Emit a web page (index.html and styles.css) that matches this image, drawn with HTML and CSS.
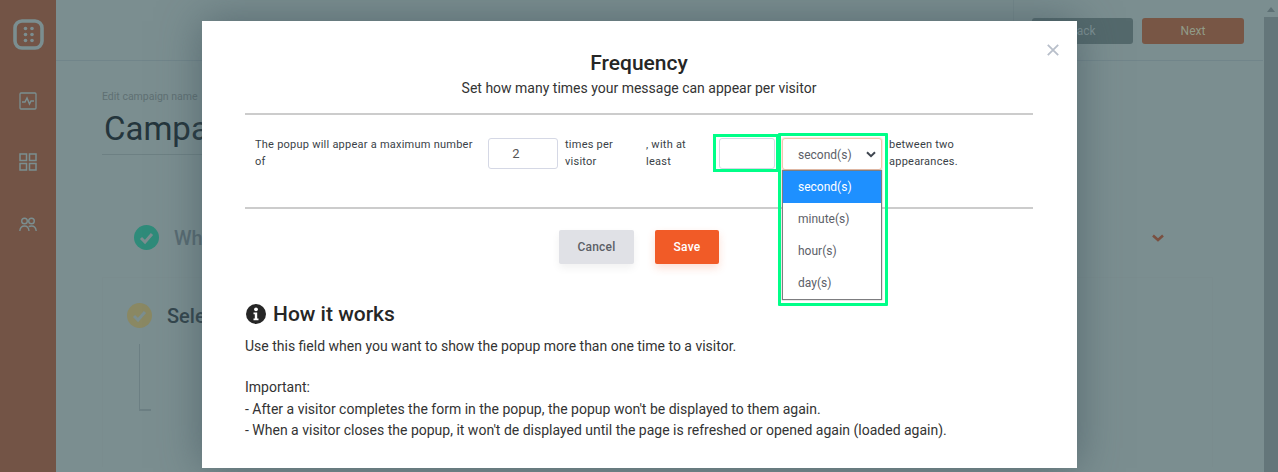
FILE: index.html
```html
<!DOCTYPE html>
<html lang="en">
<head>
<meta charset="utf-8">
<title>Frequency</title>
<link rel="stylesheet" href="styles.css">
</head>
<body>
<div class="app">
  <aside class="sidebar">
    <svg class="logo" width="32" height="32" viewBox="0 0 32 32" fill="none"><rect x="2" y="2" width="27" height="27" rx="7" stroke="#7b8e90" stroke-width="3.6"/><g fill="#7b8e90"><circle cx="12.500" cy="9.500" r="1.800"/><circle cx="19" cy="9.500" r="1.800"/><circle cx="12.500" cy="15.500" r="1.800"/><circle cx="19" cy="15.500" r="1.800"/><circle cx="12.500" cy="21.500" r="1.800"/><circle cx="19" cy="21.500" r="1.800"/></g></svg>
    <svg class="nav-icon first" width="18" height="18" viewBox="0 0 18 18" fill="none" stroke="#7b8e90"><rect x="1" y="1" width="16" height="16" rx="1" stroke-width="1.300"/><path d="M3 10h3l2-4 2.500 6 1.500-3h3" stroke-width="1.500"/></svg>
    <svg class="nav-icon second" width="18" height="18" viewBox="0 0 18 18" fill="none" stroke="#7b8e90" stroke-width="1.500"><rect x="1" y="1" width="6.500" height="6.500"/><rect x="10.500" y="1" width="6.500" height="6.500"/><rect x="1" y="10.500" width="6.500" height="6.500"/><rect x="10.500" y="10.500" width="6.500" height="6.500"/></svg>
    <svg class="nav-icon third" width="18" height="18" viewBox="0 0 18 18" fill="none" stroke="#7b8e90" stroke-width="1.400"><circle cx="5.500" cy="5" r="2.800"/><circle cx="12.500" cy="5" r="2.800"/><path d="M.8 15c.3-3.500 2.200-5 4.700-5s4.200 1.500 4.500 5M9.700 10.600c.8-.5 1.700-.6 2.800-.6 2.500 0 4.400 1.500 4.700 5"/></svg>
  </aside>
  <main class="main">
    <header class="topbar">
      <div class="topbar-actions">
        <span class="top-btn back">Back</span>
        <span class="top-btn next">Next</span>
      </div>
    </header>
    <section class="campaign">
      <div class="name-label">Edit campaign name</div>
      <div class="name-value">Campaign</div>
      <div class="step step-one">
        <svg width="25" height="25" viewBox="0 0 25 25"><circle cx="12.500" cy="12.500" r="12.500" fill="#2f8b7a"/><path d="M7 13l4 4 7-8" fill="none" stroke="#7b8e90" stroke-width="3"/></svg>
        <span class="step-title muted">What</span>
        <svg class="step-chevron" width="12" height="8" viewBox="0 0 12 8"><path d="M1 1.500l5 4.500 5-4.500" fill="none" stroke="#7a5040" stroke-width="2.600"/></svg>
      </div>
      <div class="card">
        <div class="step">
          <svg width="25" height="25" viewBox="0 0 25 25"><circle cx="12.500" cy="12.500" r="12.500" fill="#8a8863"/><path d="M7 13l4 4 7-8" fill="none" stroke="#7b8e90" stroke-width="3"/></svg>
          <span class="step-title">Select</span>
        </div>
        <div class="bracket"></div>
      </div>
    </section>
  </main>
  <div class="scrollbar"><span class="scroll-arrow"></span><span class="scroll-thumb"></span></div>
</div>

<div class="modal">
  <svg class="close" width="12" height="12" viewBox="0 0 12 12"><path d="M.8.800l10.400 10.400M11.200.800L.8 11.200" stroke="#b8bfca" stroke-width="1.800"/></svg>
  <h1 class="modal-title">Frequency</h1>
  <p class="modal-sub">Set how many times your message can appear per visitor</p>
  <div class="freq-row">
    <div class="cell cell-text">The popup will appear a maximum number of</div>
    <input class="field field-count" type="text" value="2">
    <div class="cell cell-times">times per visitor</div>
    <div class="cell cell-least">, with at least</div>
    <div class="mark-input"><input class="field field-gap" type="text"></div>
    <div class="select-wrap">
      <div class="select-box">
        <span>second(s)</span>
        <svg width="10" height="7" viewBox="0 0 10 7"><path d="M1 1.200l4 4 4-4" fill="none" stroke="#3f4650" stroke-width="2"/></svg>
      </div>
      <ul class="options">
        <li class="selected">second(s)</li>
        <li>minute(s)</li>
        <li>hour(s)</li>
        <li>day(s)</li>
      </ul>
      <div class="mark-select"></div>
    </div>
    <div class="cell cell-end">between two appearances.</div>
  </div>
  <div class="actions">
    <button class="btn cancel" type="button">Cancel</button>
    <button class="btn save" type="button">Save</button>
  </div>
  <h2 class="how">
    <svg width="20" height="20" viewBox="0 0 20 20"><circle cx="10" cy="10" r="10" fill="#262626"/><circle cx="10" cy="5.300" r="1.900" fill="#fff"/><path d="M7.500 8.500h3.700v6h1.300v1.700H7.500v-1.700h1.300v-4.300H7.500z" fill="#fff"/></svg>
    How it works
  </h2>
  <div class="how-text">
    <p>Use this field when you want to show the popup more than one time to a visitor.</p>
    <p class="gap">Important:</p>
    <p>- After a visitor completes the form in the popup, the popup won't be displayed to them again.</p>
    <p>- When a visitor closes the popup, it won't de displayed until the page is refreshed or opened again (loaded again).</p>
  </div>
</div>
</body>
</html>
```
FILE: styles.css
```css
* { box-sizing: border-box; }
html, body { margin: 0; height: 472px; overflow: hidden; }
body { font-family: Roboto, "Liberation Sans", sans-serif; background: #7b8e90; position: relative; }
.app { display: flex; height: 472px; }
.sidebar { width: 56px; flex: none; background: #735446; display: flex; flex-direction: column; align-items: center; padding-top: 19px; }
.logo { margin-left: 1px; }
.nav-icon { display: block; }
.nav-icon.first { margin-top: 41px; }
.nav-icon.second { margin-top: 43px; }
.nav-icon.third { margin-top: 45px; }
.main { flex: 1; min-width: 0; }
.topbar { height: 61px; border-bottom: 1px solid #71858a; display: flex; justify-content: flex-end; }
.topbar-actions { width: 250px; border-left: 1px solid #75888b; display: flex; gap: 9px; padding: 18px 0 0 18px; }
.top-btn { width: 101px; height: 26px; border-radius: 3px; font-size: 12px; line-height: 26px; text-align: center; color: #7d9093; }
.top-btn.back { background: #54696c; }
.top-btn.next { width: 102px; background: #785645; color: #919b88; }
.campaign { padding: 29px 50px 0 46px; }
.name-label { font-size: 10.500px; line-height: 14px; color: #5f7073; }
.name-value { width: 340px; height: 49px; margin-top: 2px; font-size: 33px; line-height: 46px; padding-left: 2px; color: #24353c; border-bottom: 1px solid #6d8083; }
.step { display: flex; align-items: center; }
.step-one { margin: 70px 0 0 32px; position: relative; }
.step-title { margin-left: 15px; font-size: 20px; font-weight: 500; color: #33454c; }
.step-title.muted { color: #586b72; }
.step-chevron { position: absolute; left: 1018px; top: 9px; }
.card { margin-top: 27px; height: 190px; padding: 25px 0 0 24px; border: 1px solid #7a8c8e; border-bottom: 0; }
.bracket { width: 12px; height: 67px; margin: 16px 0 0 12px; border-left: 1px solid #6c7f83; border-bottom: 2px solid #6c7f83; }
.scrollbar { width: 15px; flex: none; display: flex; flex-direction: column; align-items: center; }
.scroll-arrow { margin-top: 7px; border: 4px solid transparent; border-top: 0; border-bottom: 5px solid #5d7074; }
.scroll-thumb { width: 14px; flex: 1; margin-top: 5px; background: #64767a; }

.modal { position: absolute; left: 202px; top: 21px; width: 875px; height: 447px; background: #fff; padding: 29px 44px 0 43px; box-shadow: 0 0 40px rgba(60, 80, 90, .6); color: #2b2b2b; }
.close { position: absolute; left: 845px; top: 23px; }
.modal-title { margin: 0; font-size: 21px; font-weight: 500; line-height: 26px; text-align: center; color: #262626; }
.modal-sub { margin: 0; padding-bottom: 12px; border-bottom: 2px solid #cccccc; font-size: 14px; line-height: 25px; text-align: center; color: #333; }
.freq-row { display: flex; align-items: flex-start; height: 94px; padding: 21px 0 0 10px; border-bottom: 2px solid #cccccc; font-size: 11px; line-height: 17px; letter-spacing: .24px; color: #3a3f47; }
.cell { flex: none; }
.cell-text { width: 233px; padding-right: 8px; }
.cell-times { width: 81px; margin-left: 7px; padding-right: 8px; }
.cell-least { width: 54px; padding-right: 10px; margin-right: 13px; }
.cell-end { width: 80px; margin-left: 7px; }
.field { display: block; height: 31px; background: #fff; border: 1px solid #d5d8e5; border-radius: 3px; font: 13px Roboto, sans-serif; color: #555; outline: 0; padding: 0; }
.field-count { width: 70px; text-align: center; padding-right: 14px; margin-top: 2px; }
.mark-input { width: 65px; height: 38px; margin-top: -2px; padding: 1px 0 0 3px; border: 3px solid #00ff88; border-right-width: 2px; flex: none; }
.mark-input .field { width: 56px; }
.select-wrap { position: relative; width: 100px; margin-left: 4px; flex: none; }
.select-box { height: 32px; margin-top: 2px; padding: 0 5px 0 15px; display: flex; align-items: center; justify-content: space-between; font-size: 12px; letter-spacing: 0; color: #5c6068; background: #fff; border: 1px solid #f3c4ac; border-radius: 3px; box-shadow: 0 0 0 1px #fbeae2; }
.select-box span { padding-top: 2px; }
.options { position: absolute; left: 0; top: 34px; width: 100px; height: 130px; margin: 0; padding: 0; list-style: none; background: #fff; border: 1px solid #7d7d80; box-shadow: 0 0 1px #777; font-size: 12px; letter-spacing: 0; color: #5c6068; z-index: 2; }
.options li { height: 32px; line-height: 32px; padding-left: 15px; }
.options li.selected { background: #1e90ff; color: #fff; }
.mark-select { position: absolute; left: -4px; top: -3px; width: 110px; height: 173px; border: 3px solid #00ff88; border-radius: 1px; pointer-events: none; z-index: 3; }
.actions { display: flex; justify-content: center; gap: 21px; padding-top: 21px; }
.btn { height: 34px; border: 0; border-radius: 2px; font: 500 12px Roboto, sans-serif; letter-spacing: .2px; padding: 0; }
.cancel { width: 75px; background: #e0e1e6; color: #5c5f66; box-shadow: 0 4px 8px rgba(0, 0, 0, .06); }
.save { width: 64px; background: #f15b27; color: #fff; box-shadow: 0 4px 8px rgba(241, 91, 39, .2); }
.how { display: flex; align-items: center; gap: 7px; margin: 37px 0 0 1px; font-size: 21px; font-weight: 500; line-height: 26px; color: #262626; }
.how-text { margin-top: 9px; font-size: 14px; line-height: 21.300px; color: #333; }
.how-text p { margin: 0; }
.how-text .gap { margin-top: 20px; }
```
